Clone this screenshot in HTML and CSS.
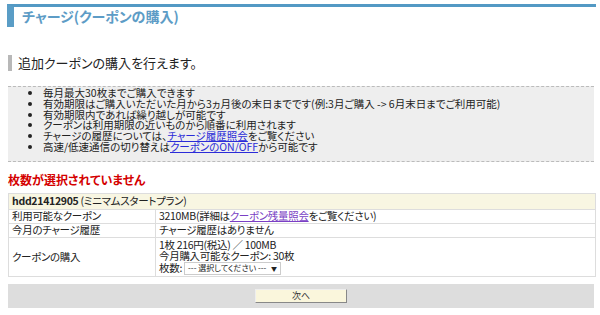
FILE: index.html
```html
<!DOCTYPE html>
<html lang="ja">
<head>
  <meta charset="UTF-8" />
  <title>チャージ(クーポンの購入)</title>
  <link rel="stylesheet" href="styles.css">
</head>
<body>
  <div class="container">
    <h1 class="page-title">チャージ(クーポンの購入)</h1>

    <h2 class="lead">追加クーポンの購入を行えます。</h2>

    <div class="notice">
      <ul>
        <li>毎月最大30枚までご購入できます</li>
        <li>有効期限はご購入いただいた月から3ヵ月後の末日までです(例:3月ご購入 -&gt; 6月末日までご利用可能)</li>
        <li>有効期限内であれば繰り越しが可能です</li>
        <li>クーポンは利用期限の近いものから順番に利用されます</li>
        <li>チャージの履歴については、<a href="#">チャージ履歴照会</a>をご覧ください</li>
        <li>高速/低速通信の切り替えは<a href="#">クーポンのON/OFF</a>から可能です</li>
      </ul>
    </div>

    <p class="error">枚数が選択されていません</p>

    <table class="coupon-table">
      <tr class="head">
        <th colspan="2"><b>hdd21412905</b> (ミニマムスタートプラン)</th>
      </tr>
      <tr>
        <td class="label">利用可能なクーポン</td>
        <td>3210MB(詳細は<a href="#" class="visited">クーポン残量照会</a>をご覧ください)</td>
      </tr>
      <tr>
        <td class="label">今月のチャージ履歴</td>
        <td>チャージ履歴はありません</td>
      </tr>
      <tr>
        <td class="label">クーポンの購入</td>
        <td class="buy">
          <div>1枚 216円(税込) ／ 100MB</div>
          <div>今月購入可能なクーポン: 30枚</div>
          <div>枚数: <span class="select">--- 選択してください --- <span class="arrow">▼</span></span></div>
        </td>
      </tr>
    </table>

    <div class="actions">
      <button type="button" class="next">次へ</button>
    </div>

    <div class="foot"><a href="#" class="visited">ページトップへ</a></div>
  </div>
</body>
</html>
```

FILE: styles.css
```css
/* Base */
* {
  box-sizing: border-box;
}
body {
  margin: 0;
  font-family: "Noto Sans CJK JP", "Liberation Sans", sans-serif;
  font-size: 12px;
  color: #333;
  background: #fff;
  font-feature-settings: "palt";
}
a {
  color: #2b2bd8;
  text-decoration: underline;
}
a.visited {
  color: #7a3fc4;
}
.container {
  padding: 4px 4px 0 7px;
}

/* Page title */
.page-title {
  margin: 0;
  height: 23px;
  border-top: 3px solid #5399c4;
  border-left: 7px solid #5a9dc6;
  padding-left: 8px;
  font-size: 14px;
  line-height: 18px;
  font-weight: bold;
  color: #5d9cc6;
}

/* Lead */
.lead {
  margin: 28px 0 0 1px;
  border-left: 4px solid #b8b8b8;
  padding-left: 6px;
  font-size: 13px;
  font-weight: normal;
  line-height: 16px;
  color: #222;
}

/* Notice box */
.notice {
  margin: 15px 2px 0 1px;
  background: #eee;
  border-top: 1px dashed #bbb;
  border-bottom: 1px dashed #bbb;
  padding: 1px 0 8px;
}
.notice ul {
  margin: 0;
  padding-left: 35px;
  list-style: disc;
  font-size: 10.5px;
  line-height: 10.8px;
  color: #222;
}

/* Error */
.error {
  margin: 11px 0 0 1px;
  font-size: 12px;
  font-weight: bold;
  color: #d40000;
  line-height: 14px;
}

/* Table */
.coupon-table {
  margin: 6px 0 0 1px;
  width: 588px;
  border-collapse: collapse;
  font-size: 10.5px;
  letter-spacing: -0.3px;
  color: #222;
}
.coupon-table th,
.coupon-table td {
  border: 1px solid #ddd;
  padding: 0 3px;
  text-align: left;
  line-height: 12px;
  vertical-align: middle;
}
.coupon-table .head th {
  background: #f8f6e2;
  font-weight: normal;
  height: 16px;
}
.coupon-table td {
  height: 14px;
}
.coupon-table .label {
  width: 147px;
}
.coupon-table .buy {
  padding-top: 1px;
  padding-bottom: 1px;
  line-height: 11.5px;
}
.select {
  display: inline-block;
  border: 1px solid #ccc;
  padding: 0 3px;
  font-size: 8px;
  line-height: 10px;
  background: #fff;
  vertical-align: middle;
  letter-spacing: 0;
}
.arrow {
  font-size: 6px;
  margin-left: 3px;
}

/* Actions */
.actions {
  margin: 7px 2px 0 1px;
  background: #ddd;
  height: 24px;
  display: flex;
  justify-content: center;
  align-items: center;
}
.next {
  width: 92px;
  height: 14px;
  padding: 0;
  font-family: inherit;
  font-size: 9px;
  line-height: 12px;
  color: #333;
  background: #faf6dc;
  border: 1px solid #eee;
  border-right-color: #888;
  border-bottom-color: #888;
}
.foot {
  text-align: right;
  padding: 5px 8px 0 0;
  font-size: 11px;
}
```
